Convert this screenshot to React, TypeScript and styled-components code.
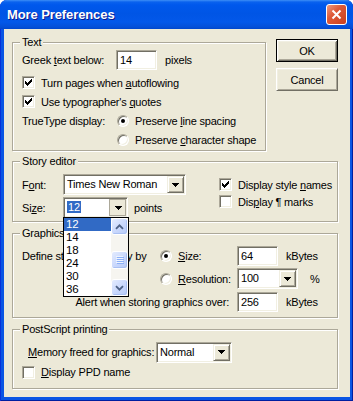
import React from "react";
import styled, { createGlobalStyle, css } from "styled-components";

const FACE = "#ECE9D8";
const SHADOW = "#ACA899";
const DARK = "#716F64";
const LIGHT = "#F1EFE2";

const GlobalStyle = createGlobalStyle`
  html, body {
    margin: 0;
    padding: 0;
    background: #ffffff;
  }
  body {
    font-family: "Liberation Sans", Arial, sans-serif;
    font-size: 11px;
    letter-spacing: -0.2px;
    color: #000;
  }
`;

const Window = styled.div`
  width: 353px;
  height: 401px;
  box-sizing: border-box;
  display: flex;
  flex-direction: column;
  background: #0A55E4;
  border-radius: 7px 7px 0 0;
  overflow: hidden;
  box-shadow: inset 1px 0 #0831D9, inset -1px 0 #001EA0, inset 0 -1px #001EA0;
`;

const TitleBar = styled.div`
  height: 29px;
  flex: none;
  display: flex;
  align-items: center;
  justify-content: space-between;
  padding: 0 6px 0 7px;
  background: linear-gradient(
    180deg,
    #3D8FF6 0px,
    #0A62EE 2px,
    #0058EC 5px,
    #0055E5 14px,
    #0358E9 22px,
    #0450D8 27px,
    #0046CC 29px
  );
  color: #fff;
  font: bold 13px "Liberation Sans", Arial, sans-serif;
  letter-spacing: -0.1px;
  text-shadow: 1px 1px #0F1A8C;
`;

const CloseButton = styled.div`
  width: 21px;
  height: 21px;
  box-sizing: border-box;
  border: 1px solid #fff;
  border-radius: 3px;
  background: linear-gradient(135deg, #EE9A80 0%, #DE5A38 40%, #C93F1E 100%);
  display: flex;
  align-items: center;
  justify-content: center;
`;

const Body = styled.div`
  flex: 1;
  margin: 0 3px 4px 4px;
  background: ${FACE};
  padding: 7px 12px 0 8px;
  display: grid;
  grid-template-columns: 254px 62px;
  column-gap: 10px;
  row-gap: 4px;
  align-content: start;
`;

const Group = styled.fieldset<{ $wide?: boolean; $mt?: number }>`
  margin: ${(p) => p.$mt ?? 0}px 0 0;
  padding: 0 9px;
  min-width: 0;
  border: 1px solid ${SHADOW};
  box-shadow: inset 1px 1px #fff, 1px 1px #fff;
  grid-column: ${(p) => (p.$wide ? "1 / -1" : "auto")};
`;

const Legend = styled.legend`
  padding: 0 2px;
  margin-left: -2px;
  line-height: 13px;
  background: ${FACE};
`;

const Row = styled.div<{ $h: number; $mt?: number; $indent?: number }>`
  display: flex;
  align-items: center;
  height: ${(p) => p.$h}px;
  margin-top: ${(p) => p.$mt ?? 0}px;
  padding-left: ${(p) => p.$indent ?? 0}px;
  white-space: nowrap;
`;

const Label = styled.span<{ $w?: number }>`
  flex: none;
  width: ${(p) => (p.$w ? `${p.$w}px` : "auto")};
  white-space: nowrap;
`;

const Unit = styled.span<{ $ml: number }>`
  margin-left: ${(p) => p.$ml}px;
`;

const U = styled.span`
  text-decoration: underline;
`;

const Edit = styled.div<{ $w: number }>`
  width: ${(p) => p.$w}px;
  height: 20px;
  box-sizing: border-box;
  flex: none;
  background: #fff;
  border: 1px solid;
  border-color: ${SHADOW} #fff #fff ${SHADOW};
  box-shadow: inset 1px 1px ${DARK}, inset -1px -1px ${LIGHT};
  padding-left: 3px;
  line-height: 18px;
`;

const Combo = styled.div<{ $w: number }>`
  position: relative;
  width: ${(p) => p.$w}px;
  height: 21px;
  box-sizing: border-box;
  flex: none;
  display: flex;
  align-items: center;
  background: #fff;
  border: 1px solid;
  border-color: ${SHADOW} #fff #fff ${SHADOW};
  box-shadow: inset 1px 1px ${DARK}, inset -1px -1px ${LIGHT};
  padding: 1px;
`;

const ComboText = styled.span`
  flex: 1;
  padding-left: 2px;
  line-height: 17px;
  overflow: hidden;
`;

const Selected = styled.span`
  background: #316AC5;
  color: #fff;
  padding: 0 1px;
`;

const ArrowBtn = styled.span<{ $pressed?: boolean }>`
  width: 17px;
  height: 17px;
  box-sizing: border-box;
  flex: none;
  display: flex;
  align-items: center;
  justify-content: center;
  background: ${FACE};
  ${(p) =>
    p.$pressed
      ? css`
          border: 1px solid ${SHADOW};
          padding: 1px 0 0 1px;
        `
      : css`
          border: 1px solid;
          border-color: ${LIGHT} ${DARK} ${DARK} ${LIGHT};
          box-shadow: inset 1px 1px #fff, inset -1px -1px ${SHADOW};
        `}
`;

const DropList = styled.div`
  position: absolute;
  left: -1px;
  top: 100%;
  width: 66px;
  box-sizing: border-box;
  border: 1px solid #000;
  background: #fff;
  display: flex;
  z-index: 10;
`;

const ListItems = styled.div`
  flex: 1;
  display: flex;
  flex-direction: column;
  font-size: 11.5px;
`;

const ListItem = styled.div<{ $sel?: boolean }>`
  height: 13px;
  line-height: 13px;
  padding-left: 2px;
  ${(p) =>
    p.$sel &&
    css`
      background: #316AC5;
      color: #fff;
    `}
`;

const ScrollBar = styled.div`
  width: 17px;
  display: flex;
  flex-direction: column;
  background: #F6F5F0;
`;

const ScrollTrack = styled.div`
  flex: 1;
`;

const ScrollPart = styled.div<{ $h: number; $mt?: number }>`
  height: ${(p) => p.$h}px;
  margin-top: ${(p) => p.$mt ?? 0}px;
  box-sizing: border-box;
  border: 1px solid #fff;
  border-radius: 3px;
  background: linear-gradient(135deg, #E4ECFE 0%, #C8D7FC 55%, #B6CAF7 100%);
  box-shadow: inset -1px -1px #A9C0F3;
  display: flex;
  align-items: center;
  justify-content: center;
`;

const ButtonCol = styled.div`
  display: flex;
  flex-direction: column;
  gap: 6px;
  padding-top: 3px;
`;

const PushButton = styled.div<{ $default?: boolean }>`
  height: 23px;
  box-sizing: border-box;
  display: flex;
  align-items: center;
  justify-content: center;
  background: ${FACE};
  ${(p) =>
    p.$default
      ? css`
          border: 1px solid #000;
          box-shadow: inset 1px 1px #fff, inset -1px -1px ${DARK},
            inset 2px 2px ${LIGHT}, inset -2px -2px ${SHADOW};
        `
      : css`
          border: 1px solid;
          border-color: #fff ${DARK} ${DARK} #fff;
          box-shadow: inset 1px 1px ${LIGHT}, inset -1px -1px ${SHADOW};
        `}
`;

const CheckLine = styled.div`
  display: flex;
  align-items: center;
  gap: 6px;
  white-space: nowrap;
`;

const Box = styled.span`
  width: 13px;
  height: 13px;
  box-sizing: border-box;
  flex: none;
  background: #fff;
  border: 1px solid;
  border-color: ${SHADOW} #fff #fff ${SHADOW};
  box-shadow: inset 1px 1px ${DARK}, inset -1px -1px ${LIGHT};
  display: flex;
  align-items: center;
  justify-content: center;
`;

const RadioCircle = styled.span<{ $on?: boolean }>`
  position: relative;
  width: 12px;
  height: 12px;
  box-sizing: border-box;
  flex: none;
  border-radius: 50%;
  background: #fff;
  border: 1px solid;
  border-color: ${SHADOW} #fff #fff ${SHADOW};
  box-shadow: inset 1px 1px ${DARK}, inset -1px -1px ${LIGHT};
  ${(p) =>
    p.$on &&
    css`
      &::after {
        content: "";
        position: absolute;
        left: 3px;
        top: 3px;
        width: 4px;
        height: 4px;
        border-radius: 50%;
        background: #000;
      }
    `}
`;

const StoryLayout = styled.div`
  display: flex;
  padding: 5px 0 2px;
`;

const StoryFields = styled.div`
  width: 197px;
  flex: none;
`;

const StoryChecks = styled.div`
  padding-top: 3px;
`;

const GraphicsGrid = styled.div`
  display: grid;
  grid-template-columns: 138px 77px auto;
  grid-template-rows: 22px 23px 23px;
  align-items: center;
  padding: 5px 0 4px;
  white-space: nowrap;
`;

const Cell = styled.div`
  display: flex;
  align-items: center;
`;

const AlertLabel = styled.div`
  grid-column: 1 / 3;
  text-align: right;
  padding-right: 8px;
`;

const Stack = styled.div<{ $pt: number; $pb: number }>`
  padding: ${(p) => p.$pt}px 0 ${(p) => p.$pb}px;
`;

const CheckMark = () => (
  <svg width="7" height="7" viewBox="0 0 7 7" shapeRendering="crispEdges">
    <path
      d="M0 2h1v3H0z M1 3h1v3H1z M2 4h1v3H2z M3 3h1v3H3z M4 2h1v3H4z M5 1h1v3H5z M6 0h1v3H6z"
      fill="#000"
    />
  </svg>
);

const DownTriangle = () => (
  <svg width="7" height="4" viewBox="0 0 7 4" shapeRendering="crispEdges">
    <path d="M0 0h7v1H0z M1 1h5v1H1z M2 2h3v1H2z M3 3h1v1H3z" fill="#000" />
  </svg>
);

const Chevron = ({ down }: { down?: boolean }) => (
  <svg width="9" height="6" viewBox="0 0 9 6">
    <path
      d={down ? "M1 1.2 L4.5 4.7 L8 1.2" : "M1 4.8 L4.5 1.3 L8 4.8"}
      fill="none"
      stroke="#4D6185"
      strokeWidth="1.8"
    />
  </svg>
);

const Grip = () => (
  <svg width="8" height="8" viewBox="0 0 8 8" shapeRendering="crispEdges">
    <path d="M0 0h7v1H0z M0 2h7v1H0z M0 4h7v1H0z M0 6h7v1H0z" fill="#EEF4FE" />
    <path d="M1 1h7v1H1z M1 3h7v1H1z M1 5h7v1H1z M1 7h7v1H1z" fill="#8CB0F8" />
  </svg>
);

const Check = ({ on, children }: { on?: boolean; children: React.ReactNode }) => (
  <CheckLine>
    <Box>{on && <CheckMark />}</Box>
    <span>{children}</span>
  </CheckLine>
);

const Radio = ({ on, children }: { on?: boolean; children: React.ReactNode }) => (
  <CheckLine>
    <RadioCircle $on={on} />
    <span>{children}</span>
  </CheckLine>
);

const ComboBox = ({
  width,
  pressed,
  children,
  list,
}: {
  width: number;
  pressed?: boolean;
  children: React.ReactNode;
  list?: React.ReactNode;
}) => (
  <Combo $w={width}>
    <ComboText>{children}</ComboText>
    <ArrowBtn $pressed={pressed}>
      <DownTriangle />
    </ArrowBtn>
    {list}
  </Combo>
);

const sizes = ["12", "14", "18", "24", "30", "36"];

const SizeList = () => (
  <DropList>
    <ListItems>
      {sizes.map((s, i) => (
        <ListItem key={s} $sel={i === 0}>
          {s}
        </ListItem>
      ))}
    </ListItems>
    <ScrollBar>
      <ScrollPart $h={17}>
        <Chevron />
      </ScrollPart>
      <ScrollTrack>
        <ScrollPart $h={18} $mt={16}>
          <Grip />
        </ScrollPart>
      </ScrollTrack>
      <ScrollPart $h={17}>
        <Chevron down />
      </ScrollPart>
    </ScrollBar>
  </DropList>
);

export default function App() {
  return (
    <>
      <GlobalStyle />
      <Window>
        <TitleBar>
          <span>More Preferences</span>
          <CloseButton>
            <svg width="11" height="11" viewBox="0 0 11 11">
              <path d="M1.5 1.5 L9.5 9.5 M9.5 1.5 L1.5 9.5" stroke="#fff" strokeWidth="2" />
            </svg>
          </CloseButton>
        </TitleBar>
        <Body>
          <Group>
            <Legend>Text</Legend>
            <Row $h={22}>
              <Label $w={94}>
                Greek <U>t</U>ext below:
              </Label>
              <Edit $w={41}>14</Edit>
              <Unit $ml={8}>pixels</Unit>
            </Row>
            <Row $h={19} $mt={2}>
              <Check on>
                Turn pages when <U>a</U>utoflowing
              </Check>
            </Row>
            <Row $h={19}>
              <Check on>
                Use typographer's <U>q</U>uotes
              </Check>
            </Row>
            <Row $h={19}>
              <Label $w={95}>TrueType display:</Label>
              <Radio on>
                Preserve <U>l</U>ine spacing
              </Radio>
            </Row>
            <Row $h={19}>
              <Label $w={95} />
              <Radio>
                Preserve <U>c</U>haracter shape
              </Radio>
            </Row>
            <Row $h={1} />
          </Group>

          <ButtonCol>
            <PushButton $default>OK</PushButton>
            <PushButton>Cancel</PushButton>
          </ButtonCol>

          <Group $wide>
            <Legend>Story editor</Legend>
            <StoryLayout>
              <StoryFields>
                <Row $h={23}>
                  <Label $w={41}>
                    F<U>o</U>nt:
                  </Label>
                  <ComboBox width={123}>Times New Roman</ComboBox>
                </Row>
                <Row $h={23}>
                  <Label $w={41}>
                    Si<U>z</U>e:
                  </Label>
                  <ComboBox width={65} pressed list={<SizeList />}>
                    <Selected>12</Selected>
                  </ComboBox>
                  <Unit $ml={6}>points</Unit>
                </Row>
              </StoryFields>
              <StoryChecks>
                <Row $h={17}>
                  <Check on>
                    Display style <U>n</U>ames
                  </Check>
                </Row>
                <Row $h={17}>
                  <Check>
                    Dis<U>p</U>lay ¶ marks
                  </Check>
                </Row>
              </StoryChecks>
            </StoryLayout>
          </Group>

          <Group $wide $mt={1}>
            <Legend>Graphics</Legend>
            <GraphicsGrid>
              <Label>Define standard display by</Label>
              <Radio on>
                <U>S</U>ize:
              </Radio>
              <Cell>
                <Edit $w={41}>64</Edit>
                <Unit $ml={8}>kBytes</Unit>
              </Cell>

              <span />
              <Radio>
                <U>R</U>esolution:
              </Radio>
              <Cell>
                <ComboBox width={61}>100</ComboBox>
                <Unit $ml={12}>%</Unit>
              </Cell>

              <AlertLabel>Alert when storing graphics over:</AlertLabel>
              <Cell>
                <Edit $w={41}>256</Edit>
                <Unit $ml={8}>kBytes</Unit>
              </Cell>
            </GraphicsGrid>
          </Group>

          <Group $wide $mt={1}>
            <Legend>PostScript printing</Legend>
            <Stack $pt={5} $pb={7}>
              <Row $h={22} $indent={6}>
                <Label $w={128}>
                  <U>M</U>emory freed for graphics:
                </Label>
                <ComboBox width={76}>Normal</ComboBox>
              </Row>
              <Row $h={18}>
                <Check>
                  <U>D</U>isplay PPD name
                </Check>
              </Row>
            </Stack>
          </Group>
        </Body>
      </Window>
    </>
  );
}
